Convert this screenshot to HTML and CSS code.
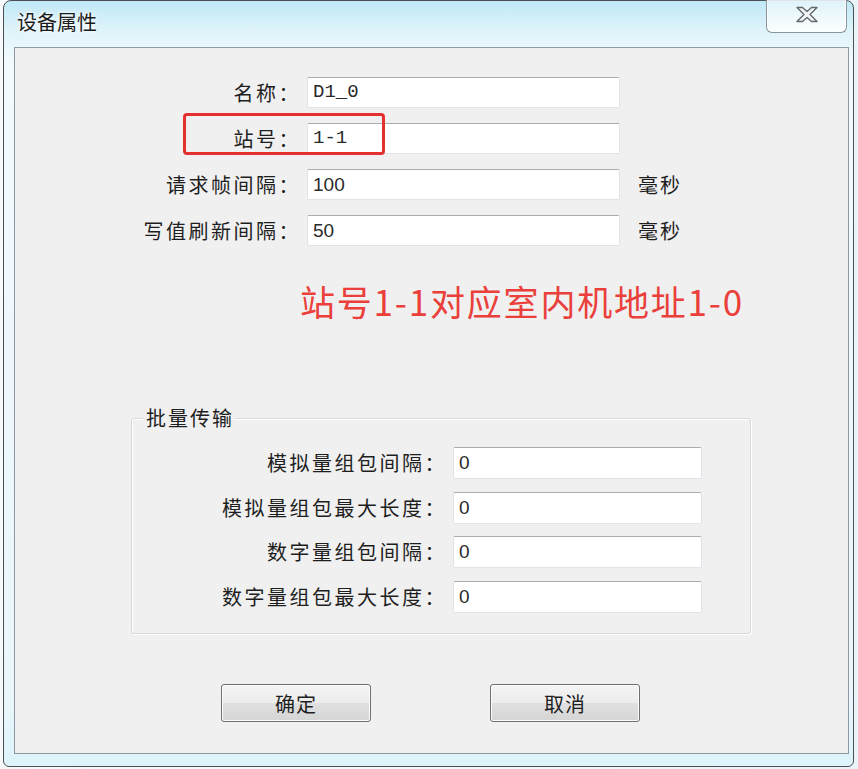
FILE: index.html
```html
<!DOCTYPE html>
<html lang="zh-CN">
<head>
    <meta charset="UTF-8">
    <title>设备属性</title>
    <link rel="stylesheet" href="styles.css">
</head>
<body>
    <div class="window">
        <div class="titlebar">
            <span class="title">设备属性</span>
            <button class="close">
                <svg width="24" height="17" viewBox="0 0 24 17">
                    <polygon points="2,1.5 7.5,1.5 12,5.5 16.5,1.5 22,1.5 15,8.5 22,15.5 16.5,15.5 12,11.5 7.5,15.5 2,15.5 9,8.5"
                             fill="#f3f5f7" stroke="#62686d" stroke-width="1.4" stroke-linejoin="round"/>
                </svg>
            </button>
        </div>

        <div class="client">
            <div class="form">
                <label>名称：</label>
                <div class="input mono">D1_0</div>
                <span></span>

                <label>站号：</label>
                <div class="input mono">1-1</div>
                <span></span>

                <label>请求帧间隔：</label>
                <div class="input">100</div>
                <span class="unit">毫秒</span>

                <label>写值刷新间隔：</label>
                <div class="input">50</div>
                <span class="unit">毫秒</span>

                <div class="highlight"></div>
            </div>

            <p class="note">站号1-1对应室内机地址1-0</p>

            <div class="group">
                <span class="group-title">批量传输</span>
                <div class="group-form">
                    <label>模拟量组包间隔：</label>
                    <div class="input">0</div>
                    <label>模拟量组包最大长度：</label>
                    <div class="input">0</div>
                    <label>数字量组包间隔：</label>
                    <div class="input">0</div>
                    <label>数字量组包最大长度：</label>
                    <div class="input">0</div>
                </div>
            </div>

            <div class="buttons">
                <button class="btn">确定</button>
                <button class="btn">取消</button>
            </div>
        </div>
    </div>
</body>
</html>
```

FILE: styles.css
```css
body {
    margin: 0;
    background: linear-gradient(to right, #f7f9fb, #eaf3f8);
    font-family: "Noto Sans CJK SC", "Liberation Sans", sans-serif;
    color: #1e1e1e;
    overflow: hidden;
}

.window {
    margin-left: 3px;
    width: 849px;
    height: 765px;
    display: flex;
    flex-direction: column;
    border: 1px solid #4b5156;
    border-radius: 8px 8px 6px 6px;
    background: linear-gradient(to bottom, #bfe8f6 0px, #def3fa 28px, #f2fafd 60px, #eaf6fb 700px, #dcf4fa 100%);
}

.titlebar {
    height: 46px;
    display: flex;
    justify-content: space-between;
    align-items: flex-start;
}

.title {
    padding: 9px 0 0 13px;
    font-size: 20px;
    line-height: 24px;
    color: #1b1b1b;
    text-shadow: 0 0 6px #ffffff, 0 0 3px #ffffff;
}

.close {
    margin: -1px 6px 0 0;
    width: 81px;
    height: 33px;
    padding: 0 0 3px;
    border: 1px solid #8c959c;
    border-top: none;
    border-radius: 0 0 6px 6px;
    background: linear-gradient(to bottom, rgba(255, 255, 255, 0.45), rgba(255, 255, 255, 0.85));
    box-shadow: inset 0 0 0 1px rgba(255, 255, 255, 0.7);
    display: flex;
    align-items: center;
    justify-content: center;
}

.client {
    margin: 0 4px 0 10px;
    height: 705px;
    border: 1px solid #8e99a3;
    background: #f0f0f0;
}

.form {
    position: relative;
    margin-top: 29px;
    display: grid;
    grid-template-columns: 278px 313px auto;
    column-gap: 14px;
    row-gap: 15px;
    align-items: center;
}

.form label,
.group-form label {
    text-align: right;
    font-size: 20px;
    line-height: 24px;
    letter-spacing: 2.5px;
    margin-right: -8px;
}

.input {
    height: 29px;
    border: 1px solid #e2e3ea;
    border-top-color: #abadb3;
    border-radius: 2px;
    background: #ffffff;
    padding-left: 5px;
    font-family: "Liberation Sans", "DejaVu Sans", sans-serif;
    font-size: 19px;
    line-height: 29px;
    color: #2a2a2a;
}

.input.mono {
    font-family: "Liberation Mono", monospace;
    font-size: 19px;
}

.unit {
    font-size: 20px;
    line-height: 24px;
    letter-spacing: 2px;
    margin-left: 4px;
}

.highlight {
    position: absolute;
    left: 168px;
    top: 36px;
    width: 196px;
    height: 36px;
    border: 3px solid #e4302e;
    border-radius: 4px;
}

.note {
    margin: 34px 0 0 285px;
    font-size: 35px;
    line-height: 42px;
    letter-spacing: 1.8px;
    color: #ea3f3a;
}

.group {
    margin: 96px 0 0 116px;
    width: 618px;
    height: 214px;
    display: flex;
    flex-direction: column;
    align-items: flex-start;
    border: 1px solid #d5dadf;
    border-radius: 3px;
    box-shadow: inset 1px 1px #ffffff, 1px 1px #ffffff;
}

.group-title {
    margin: -13px 0 0 13px;
    padding: 0 1px;
    background: #f0f0f0;
    font-size: 20px;
    line-height: 24px;
    letter-spacing: 2px;
}

.group-form {
    margin-top: 17px;
    display: grid;
    grid-template-columns: 307px 249px;
    column-gap: 14px;
    row-gap: 12.5px;
    align-items: center;
}

.group-form .input {
    height: 30px;
    line-height: 30px;
}

.buttons {
    margin: 50px 0 0 206px;
    display: flex;
    gap: 119px;
}

.btn {
    width: 150px;
    height: 38px;
    border: 1px solid #707070;
    border-radius: 3px;
    background: linear-gradient(to bottom, #f4f4f4 0%, #ececec 50%, #e0e0e0 51%, #d5d5d5 100%);
    box-shadow: inset 0 0 0 1px #fcfcfc;
    font-family: "Noto Sans CJK SC", sans-serif;
    font-size: 20px;
    color: #1e1e1e;
    letter-spacing: 1px;
}
```
